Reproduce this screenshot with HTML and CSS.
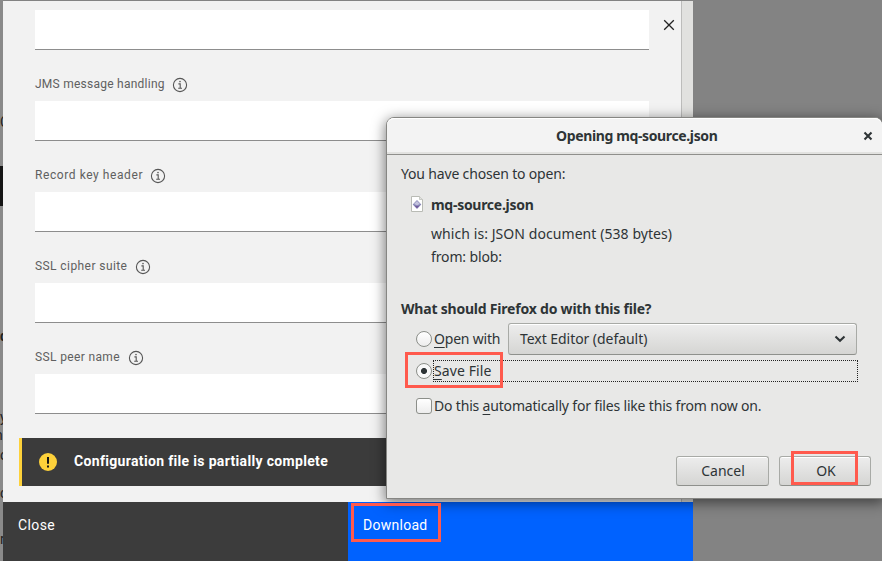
FILE: index.html
```html
<!DOCTYPE html>
<html lang="en">
<head>
<meta charset="utf-8">
<title>Opening mq-source.json</title>
<link rel="stylesheet" href="styles.css">
</head>
<body>
<svg class="defs" width="0" height="0"><defs>
<symbol id="info" viewBox="0 0 16 16"><circle cx="8" cy="8" r="6.6" fill="none" stroke="#565656" stroke-width="1.1"/><path d="M6.4 6.9H8.2V11M6.2 11.2H10" fill="none" stroke="#565656" stroke-width="1.1"/><circle cx="8" cy="4.6" r=".8" fill="#565656"/></symbol>
</defs></svg>
<div class="page">
  <div class="behind">
    <span class="bit b1">C</span><i class="bar"></i><span class="bit b2">d</span><span class="bit b3">y</span><span class="bit b4">n</span><span class="bit b5">o</span><span class="bit b6">c</span><span class="bit b7">r</span>
  </div>
  <main class="panel">
    <div class="body">
      <div class="form">
        <div class="field first"><div class="input"></div></div>
        <div class="field"><label><span class="l1">JMS message handling</span><svg><use href="#info"/></svg></label><div class="input"></div></div>
        <div class="field"><label><span class="l2">Record key header</span><svg><use href="#info"/></svg></label><div class="input"></div></div>
        <div class="field"><label><span class="l3">SSL cipher suite</span><svg><use href="#info"/></svg></label><div class="input"></div></div>
        <div class="field"><label><span class="l4">SSL peer name</span><svg><use href="#info"/></svg></label><div class="input"></div></div>
        <div class="notice">
          <svg width="18" height="18" viewBox="0 0 18 18"><circle cx="9" cy="9" r="9" fill="#fdd13a"/><path d="M8 4h2v6.7H8zM8 12.5h2v2H8z" fill="#161616"/></svg>
          <b>Configuration file is partially complete</b>
        </div>
      </div>
      <div class="remove"><svg width="12" height="12" viewBox="0 0 12 12"><path d="M1.2 1.2 10.8 10.8M10.8 1.2 1.2 10.8" stroke="#222" stroke-width="1.3"/></svg></div>
      <div class="scroll"></div>
    </div>
    <footer><div class="close"><span>Close</span></div><div class="download"><span>Download</span></div></footer>
  </main>
</div>

<section class="dialog">
  <header><b>Opening mq-source.json</b>
    <svg width="10" height="10" viewBox="0 0 10 10"><path d="M1.5 1.5 8.5 8.5M8.5 1.5 1.5 8.5" stroke="#2e3436" stroke-width="2.1"/></svg>
  </header>
  <div class="content">
    <p class="chosen"><span>You have chosen to open:</span></p>
    <div class="file">
      <svg width="12" height="16" viewBox="0 0 12 16"><path d="M.5.5H8.5L11.5 3.5V15.5H.5Z" fill="#fff" stroke="#b9bbb5"/><path d="M8.5.5V3.5H11.5" fill="#e2e2df" stroke="#b8bab4" stroke-width=".7"/><path d="M6 4.1 10.3 8.6 6 13.1 1.7 8.6Z" fill="#8988b8"/><path d="M6 5 9 8.1 6 9.2 3 8.1Z" fill="#c4c3de"/><path d="M3.5 9.5 6 12.1 8.5 9.5 6 10.6Z" fill="#69478f"/></svg>
      <b>mq-source.json</b>
    </div>
    <p class="meta"><span class="m1">which is: JSON document (538 bytes)</span></p>
    <p class="meta"><span class="m2">from: blob:</span></p>
    <p class="question"><b>What should Firefox do with this file?</b></p>
    <div class="open"><i class="radio"></i><span class="ow"><u>O</u>pen with</span>
      <div class="select"><span>Text Editor (default)</span><svg width="12" height="8" viewBox="0 0 12 8"><path d="M1.5 1.5 6 5.8 10.5 1.5" fill="none" stroke="#2e3436" stroke-width="2.1"/></svg></div>
    </div>
    <div class="save"><i class="radio on"></i><div class="focus"><span><u>S</u>ave File</span></div></div>
    <div class="auto"><i class="check"></i><span>Do this <u>a</u>utomatically for files like this from now on.</span></div>
    <div class="actions"><div class="btn cancel">Cancel</div><div class="btn ok">OK</div></div>
  </div>
</section>
<i class="mark mark-save"></i><i class="mark mark-ok"></i><i class="mark mark-dl"></i>
</body>
</html>
```

FILE: styles.css
```css
* { box-sizing: border-box; }
body { margin: 0; width: 882px; height: 561px; overflow: hidden; background: #838383; position: relative; }
.defs { display: block; height: 0; }
.page { display: flex; height: 561px; font-family: Roboto, "Liberation Sans", sans-serif; }
.behind { width: 3px; height: 561px; overflow: hidden; background: #8a8a8a; position: relative; }
.bit { position: absolute; left: 0; font-size: 14px; line-height: 16px; color: #222; }
.b1 { top: 114px; } .b2 { top: 328px; font-weight: bold; } .b3 { top: 409px; } .b4 { top: 427px; left: -5px; } .b5 { top: 447px; } .b6 { top: 485px; } .b7 { top: 531px; }
.bar { position: absolute; top: 166px; left: 0; width: 3px; height: 40px; background: #151515; }
.panel { width: 690px; margin-top: 1px; display: flex; flex-direction: column; }
.body { height: 501px; display: flex; background: #f2f2f2; }
.form { width: 646px; }
.field { margin-left: 32px; }
.field.first { padding-top: 9px; }
.input { height: 40px; background: #fff; border-bottom: 1px solid #8d8d8d; }
label { display: flex; height: 51px; padding-top: 26px; align-items: flex-start; font-size: 12px; line-height: 16px; color: #606060; }
label svg { width: 16px; height: 16px; margin: 1px 0 0 7px; }
label span { white-space: nowrap; }
.l1 { width: 130px; letter-spacing: .25px; }
.l2 { width: 108px; letter-spacing: .58px; }
.l3 { width: 93px; letter-spacing: .42px; }
.l4 { width: 86px; letter-spacing: .36px; }
.notice { margin: 24px 0 0 16px; height: 48px; width: 646px; background: #3b3b3b; border-left: 3px solid #fdd13a; display: flex; align-items: center; padding-left: 17px; gap: 17px; color: #fff; font-size: 14px; letter-spacing: .33px; }
.notice b { line-height: 18px; margin-top: -2px; white-space: nowrap; font-weight: 700; }
.notice svg { margin-top: -1px; }
.remove { width: 32px; padding: 18px 0 0 14px; }
.remove svg { display: block; }
.scroll { width: 12px; background: #e1e1df; border-left: 1px solid #bcbcbb; }
footer { display: flex; height: 59px; color: #fff; font-size: 14px; line-height: 18px; }
footer div { width: 345px; padding: 14px 15px; }
.close { background: #3c3c3c; }
.download { background: #0062ff; }
.close span { letter-spacing: .4px; }
.download span { letter-spacing: .27px; }

.dialog { position: absolute; left: 386px; top: 117px; width: 497px; height: 382px; border: 1px solid #868683; border-radius: 8px 8px 0 0; background: #e8e8e7; box-shadow: 0 3px 13px 1px rgba(0,0,0,.5); font: 14px/20px "Noto Sans", "Open Sans", sans-serif; color: #2e3436; }
.dialog header { height: 37px; display: flex; align-items: center; justify-content: flex-end; border-bottom: 1px solid #8f8f8c; background: #f3f3f3; border-radius: 7px 7px 0 0; box-shadow: inset 0 1px #fff, inset 0 -2px #e2e2e0; }
header b { width: 162px; margin-right: 145px; white-space: nowrap; letter-spacing: -.37px; }
header svg { margin-right: 9px; }
.content { padding: 9px 11px 0 14px; }
.content span, .content b { white-space: nowrap; }
p { margin: 0; }
.chosen { letter-spacing: -.17px; }
.file { display: flex; align-items: center; margin-top: 11px; height: 20px; padding-left: 10px; gap: 8px; letter-spacing: -.28px; }
.file svg { margin-top: -3px; }
.meta { margin-left: 30px; height: 23px; }
.m1 { letter-spacing: .07px; }
.m2 { letter-spacing: -.13px; }
.file + .meta { margin-top: 9px; }
.question { margin-top: 29px; letter-spacing: -.21px; }
.open { display: flex; align-items: center; height: 32px; margin: 4px 0 0 15px; }
.radio, .check { flex: none; width: 16px; height: 16px; margin-right: 2px; border: 1px solid #8c8f8a; background: linear-gradient(#fff, #ededed); }
.radio { border-radius: 50%; }
.check { border-radius: 3px; }
.on { background: radial-gradient(circle, #2e3436 0 2.7px, #f8f8f8 3.3px); }
.ow { width: 67px; letter-spacing: -.2px; }
.select { margin-left: 7px; width: 349px; height: 32px; display: flex; align-items: center; justify-content: space-between; padding: 0 10px 0 11px; border: 1px solid #a8aaa6; border-bottom-color: #8e908c; border-radius: 3px; background: linear-gradient(#ededed, #d5d5d3); box-shadow: inset 0 1px #fff; letter-spacing: -.05px; }
.save { display: flex; align-items: center; margin: 5px 0 0 15px; height: 22px; }
.focus { margin-left: -1px; width: 425px; height: 22px; border: 1px dotted #222; line-height: 20px; letter-spacing: .1px; }
.auto { display: flex; align-items: center; margin: 14px 0 0 15px; height: 20px; letter-spacing: -.18px; }
u { text-underline-offset: 3px; text-decoration-thickness: 1px; }
.actions { margin-top: 40px; display: flex; justify-content: flex-end; gap: 10px; }
.btn { width: 92px; height: 30px; text-align: center; line-height: 28px; border: 1px solid #a8aaa6; border-bottom-color: #8e908c; border-radius: 3px; background: linear-gradient(#ededed, #d5d5d3); box-shadow: inset 0 1px #fff; }
.cancel { width: 93px; padding-left: 1px; }
.ok { padding-left: 2px; }
.mark { position: absolute; border: 3px solid #ff5a4d; }
.mark-save { left: 405px; top: 352px; width: 98px; height: 36px; }
.mark-ok { left: 791px; top: 451px; width: 67px; height: 34px; }
.mark-dl { left: 351px; top: 503px; width: 90px; height: 39px; }
```
